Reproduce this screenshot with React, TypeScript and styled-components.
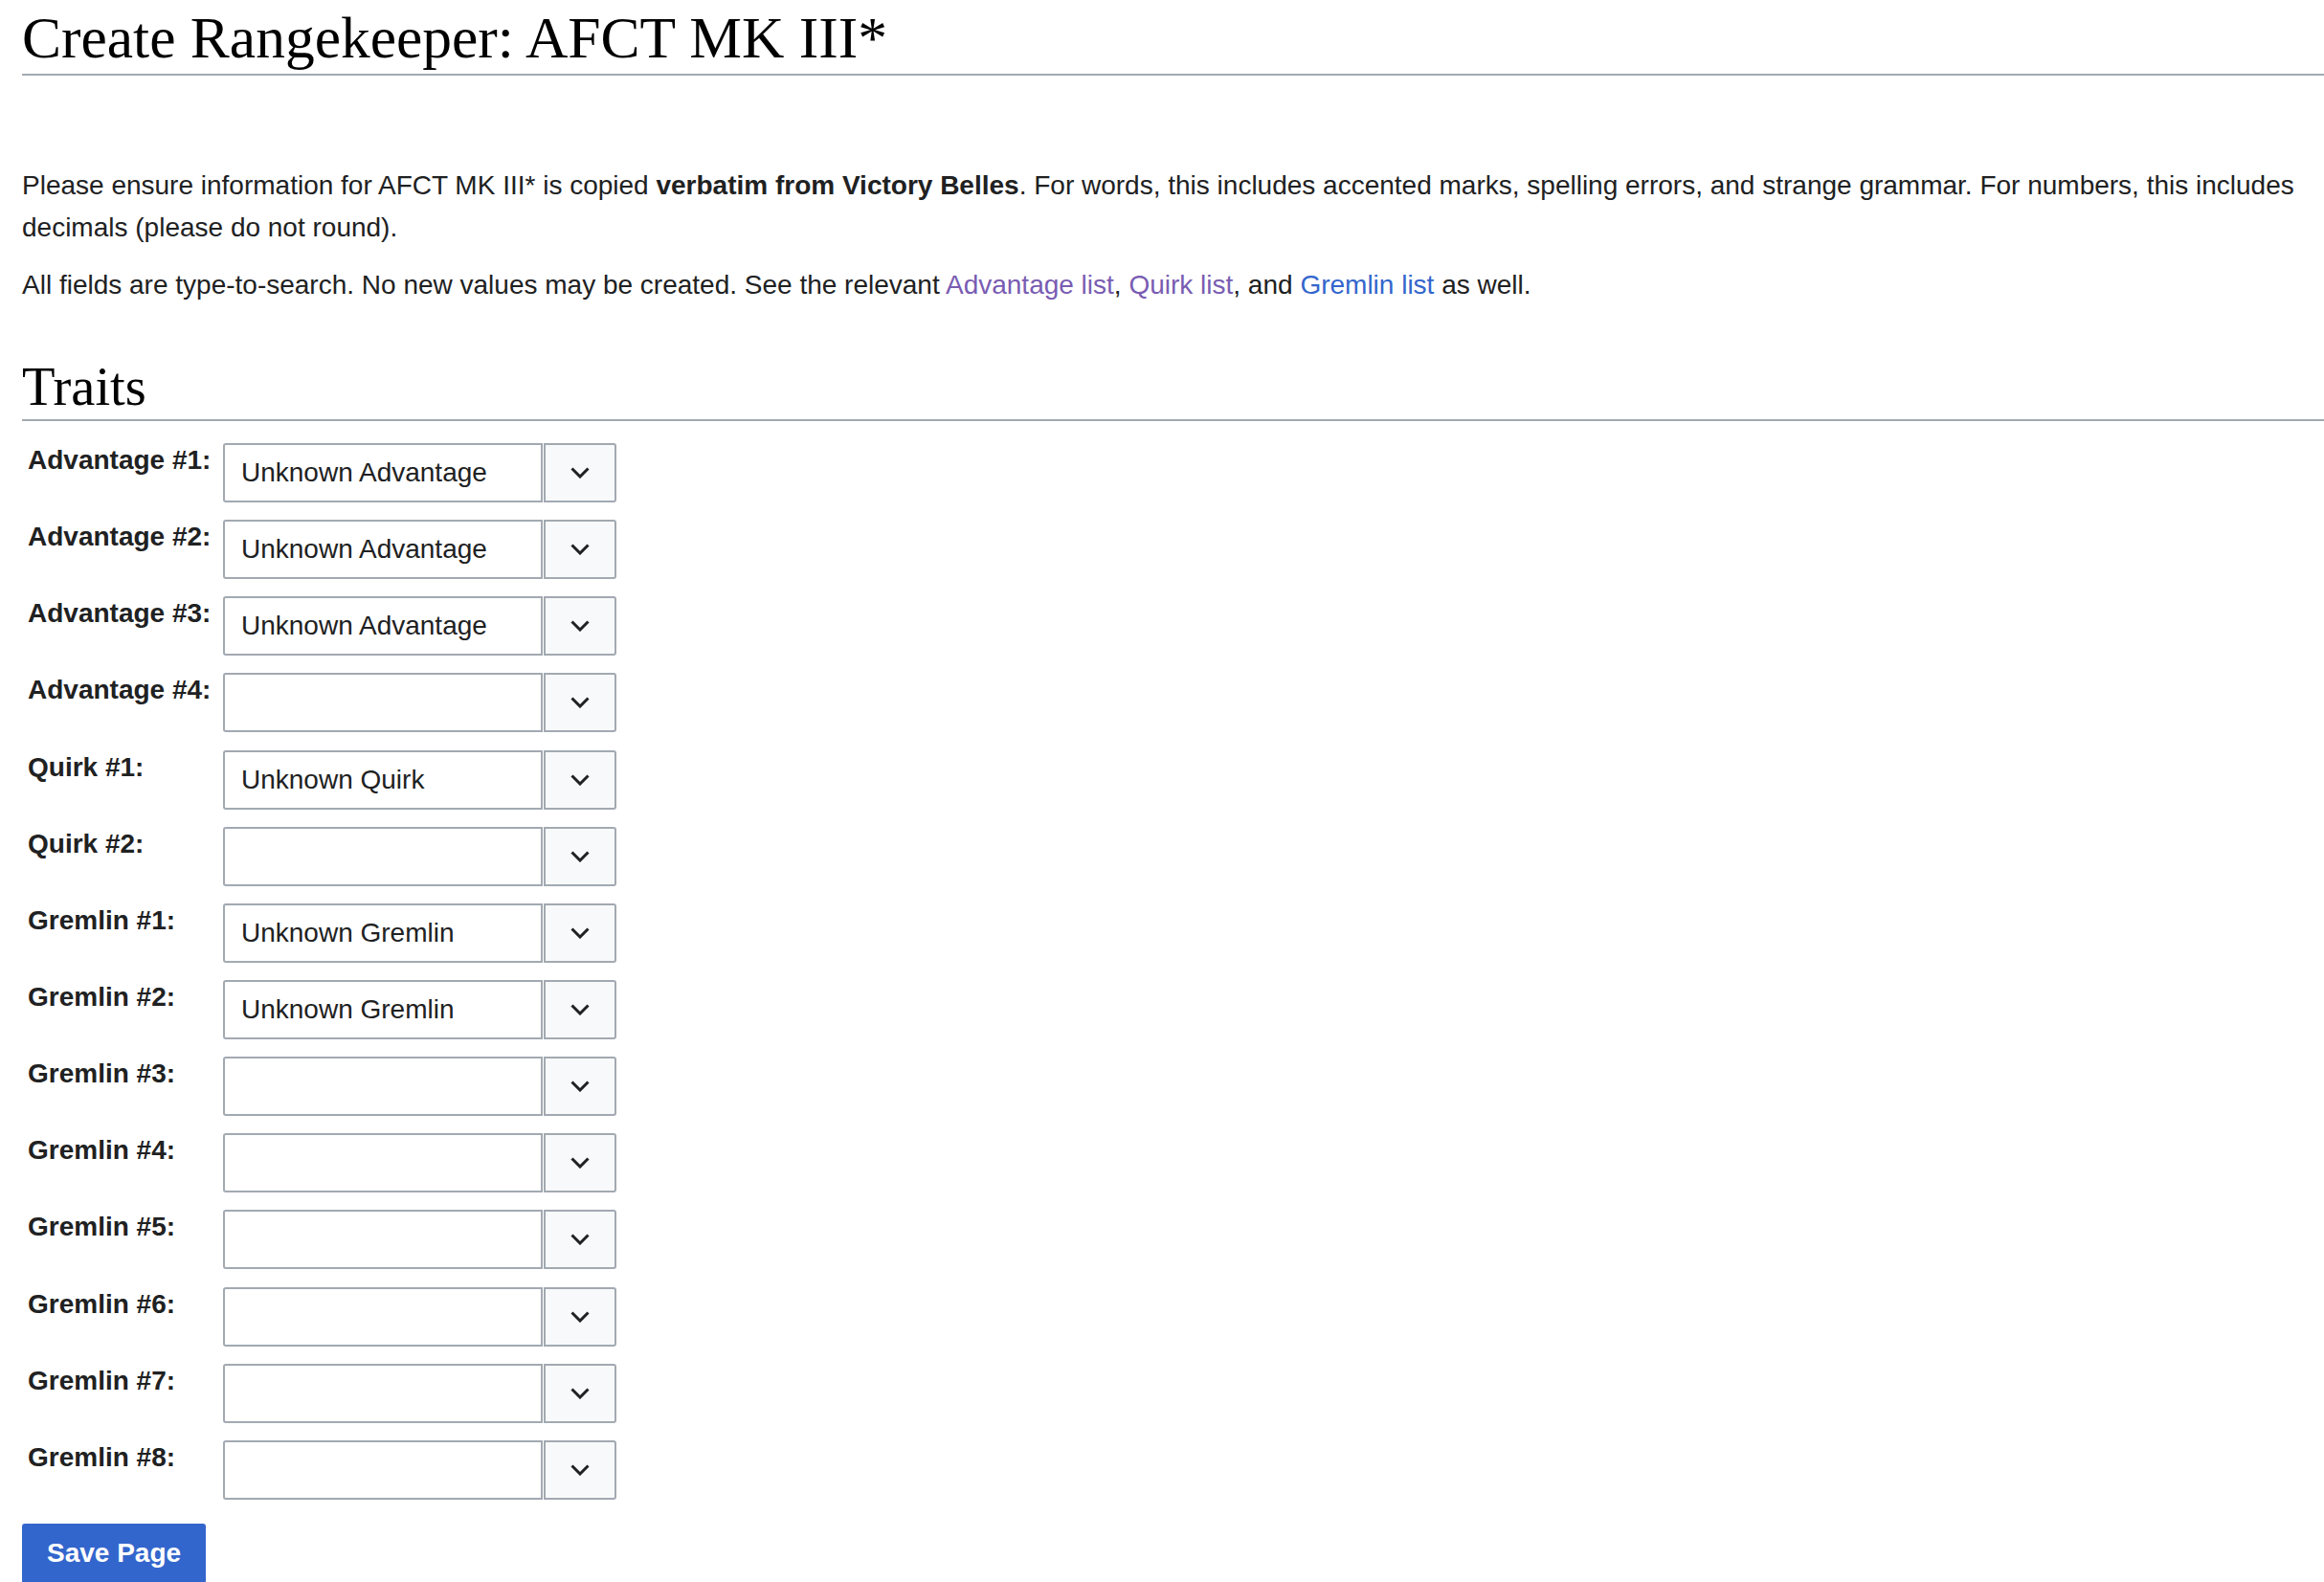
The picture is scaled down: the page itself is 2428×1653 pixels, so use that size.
import styled, { createGlobalStyle } from 'styled-components';

const GlobalStyle = createGlobalStyle`
  html, body {
    margin: 0;
    padding: 0;
    background: #ffffff;
    overflow: hidden;
  }
  body {
    font-family: "Liberation Sans", Arial, sans-serif;
    color: #202122;
  }
`

const Page = styled.div`
  padding: 0 0 0 23px;
`

const Title = styled.h1`
  margin: 0;
  padding-top: 1px;
  font-family: "Liberation Serif", "Times New Roman", serif;
  font-weight: 400;
  font-size: 61.5px;
  line-height: 76px;
  color: #000000;
  border-bottom: 2px solid #a2a9b1;
`

const Intro = styled.p<{ $first?: boolean }>`
  margin: ${props => (props.$first ? '93px' : '16px')} 0 0 0;
  font-size: 28px;
  line-height: 44px;
`

const Link = styled.a<{ $visited?: boolean }>`
  color: ${props => (props.$visited ? '#795cb2' : '#3366cc')};
  text-decoration: none;
`

const Heading = styled.h2`
  margin: 50px 0 0 0;
  font-family: "Liberation Serif", "Times New Roman", serif;
  font-weight: 400;
  font-size: 56.5px;
  line-height: 68px;
  color: #000000;
  border-bottom: 2px solid #a2a9b1;
`

const FieldList = styled.div`
  display: flex;
  flex-direction: column;
  gap: 14.15px;
  margin-top: 19px;
`

const FieldRow = styled.div`
  display: flex;
  align-items: flex-start;
`

const FieldLabel = styled.label`
  box-sizing: border-box;
  width: 210px;
  padding-left: 6px;
  font-size: 28px;
  font-weight: 700;
  line-height: 44px;
  color: #202122;
`

const Combo = styled.div`
  display: flex;
  gap: 1px;
  margin-top: 4px;
  height: 62px;
`

const ComboInput = styled.input`
  box-sizing: border-box;
  width: 334px;
  height: 62px;
  margin: 0;
  padding: 0 12px 0 17px;
  border: 2px solid #a2a9b1;
  border-radius: 3px 0 0 3px;
  background: #ffffff;
  font-family: "Liberation Sans", Arial, sans-serif;
  font-size: 28px;
  color: #202122;
  outline: none;
`

const ComboButton = styled.button`
  box-sizing: border-box;
  width: 76px;
  height: 62px;
  margin: 0;
  padding: 0;
  display: flex;
  align-items: center;
  justify-content: center;
  border: 2px solid #a2a9b1;
  border-radius: 0 3px 3px 0;
  background: #f8f9fa;
  color: #202122;
  cursor: pointer;
`

const SaveButton = styled.button`
  margin-top: 25px;
  height: 63px;
  padding: 0 26px;
  border: none;
  border-radius: 3px;
  background: #3366cc;
  color: #ffffff;
  font-family: "Liberation Sans", Arial, sans-serif;
  font-size: 28px;
  font-weight: 700;
  cursor: pointer;
`

const fields: { label: string; value: string }[] = [
  { label: 'Advantage #1:', value: 'Unknown Advantage' },
  { label: 'Advantage #2:', value: 'Unknown Advantage' },
  { label: 'Advantage #3:', value: 'Unknown Advantage' },
  { label: 'Advantage #4:', value: '' },
  { label: 'Quirk #1:', value: 'Unknown Quirk' },
  { label: 'Quirk #2:', value: '' },
  { label: 'Gremlin #1:', value: 'Unknown Gremlin' },
  { label: 'Gremlin #2:', value: 'Unknown Gremlin' },
  { label: 'Gremlin #3:', value: '' },
  { label: 'Gremlin #4:', value: '' },
  { label: 'Gremlin #5:', value: '' },
  { label: 'Gremlin #6:', value: '' },
  { label: 'Gremlin #7:', value: '' },
  { label: 'Gremlin #8:', value: '' },
];

function ExpandIcon() {
  return (
    <svg width="20" height="12" viewBox="0 0 20 12" fill="none" aria-hidden="true">
      <polyline points="1.5,1.5 10,10 18.5,1.5" stroke="currentColor" strokeWidth="3" />
    </svg>
  );
}

function App() {
  return (
    <Page>
      <GlobalStyle />
      <Title>Create Rangekeeper: AFCT MK III*</Title>
      <Intro $first>
        Please ensure information for AFCT MK III* is copied <b>verbatim from Victory Belles</b>. For words,
        this includes accented marks, spelling errors, and strange grammar. For numbers, this includes
        decimals (please do not round).
      </Intro>
      <Intro>
        All fields are type-to-search. No new values may be created. See the relevant{' '}
        <Link href="#" $visited>Advantage list</Link>, <Link href="#" $visited>Quirk list</Link>, and{' '}
        <Link href="#">Gremlin list</Link> as well.
      </Intro>
      <Heading>Traits</Heading>
      <FieldList>
        {fields.map((field, i) => (
          <FieldRow key={i}>
            <FieldLabel>{field.label}</FieldLabel>
            <Combo>
              <ComboInput defaultValue={field.value} />
              <ComboButton type="button" aria-label="Show options">
                <ExpandIcon />
              </ComboButton>
            </Combo>
          </FieldRow>
        ))}
      </FieldList>
      <SaveButton type="button">Save Page</SaveButton>
    </Page>
  );
}

export default App;
